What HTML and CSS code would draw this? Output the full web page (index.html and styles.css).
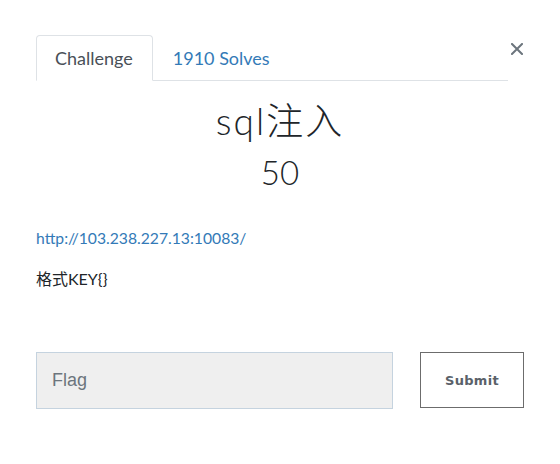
FILE: index.html
```html
<!DOCTYPE html>
<html>
<head>
<meta charset="utf-8">
<link rel="stylesheet" href="styles.css">
</head>
<body>
<div class="page">
  <div class="backdrop-edge"><div class="edge-top"></div><div class="edge-bottom"></div></div>
  <div class="modal">
    <div class="header">
      <ul class="tabs">
        <li class="tab active">Challenge</li>
        <li class="tab link">1910 Solves</li>
      </ul>
      <button class="close" aria-label="Close">
        <svg width="12" height="12" viewBox="0 0 12 12"><path d="M1 1L11 11M11 1L1 11" stroke="#6c757d" stroke-width="2" stroke-linecap="square"/></svg>
      </button>
    </div>
    <h2 class="title">sql注入</h2>
    <h3 class="value">50</h3>
    <div class="desc">
      <p class="url"><a href="#">http://103.238.227.13:10083/</a></p>
      <p class="fmt">格式KEY{}</p>
    </div>
    <form class="submit-row">
      <input class="flag" type="text" placeholder="Flag">
      <button class="submit" type="button">Submit</button>
    </form>
  </div>
</div>
</body>
</html>
```

FILE: styles.css
```css
html, body {
  margin: 0;
  padding: 0;
  background: #fff;
}
.page {
  display: flex;
  height: 464px;
  font-family: Lato, "Noto Sans CJK SC", sans-serif;
  color: #212529;
}
.backdrop-edge {
  width: 1px;
  display: flex;
  flex-direction: column;
}
.edge-top { height: 42px; background: #222; }
.edge-bottom { flex: 1; background: #5d6168; }
.modal {
  flex: 1;
  padding: 35px 36px 0 36px;
}
.header {
  display: flex;
  align-items: flex-start;
}
.tabs {
  list-style: none;
  margin: 0;
  padding: 0;
  display: flex;
  flex: 1;
  border-bottom: 1px solid #dee2e6;
  height: 45px;
}
.tab {
  font-size: 18px;
  line-height: 24px;
  padding: 10px 19px 10px 18px;
  border: 1px solid transparent;
  border-radius: 4px 4px 0 0;
}
.tab.active {
  color: #495057;
  border-color: #dee2e6 #dee2e6 #fff;
  background: #fff;
  height: 24px;
  margin-bottom: -1px;
}
.tab.link { color: #337ab7; padding-left: 19px; }
.close {
  background: none;
  border: 0;
  padding: 0;
  margin: 8px 1px 0 3px;
  width: 12px;
  height: 12px;
  display: flex;
}
.title {
  margin: 18px 0 0;
  text-align: center;
  font-weight: 300;
  font-size: 37px;
  line-height: 44px;
  letter-spacing: 2px;
  color: #212529;
}
.value {
  margin: 10px 0 0;
  text-align: center;
  font-weight: 300;
  font-size: 33px;
  line-height: 38px;
  color: #212529;
}
.desc {
  margin-top: 35px;
  font-size: 16px;
  line-height: 24px;
}
.desc p { margin: 0; }
.url { font-size: 15.7px; }
.url a { color: #337ab7; text-decoration: none; }
.fmt { margin-top: 17px !important; }
.submit-row {
  display: flex;
  margin-top: 61px;
  gap: 27px;
}
.flag {
  width: 357px;
  height: 57px;
  box-sizing: border-box;
  background: #efefef;
  border: 1px solid #c5d3df;
  padding: 0 15px;
  font-family: "Liberation Sans", Arial, sans-serif;
  font-size: 18px;
  color: #495057;
  outline: none;
}
.flag::placeholder { color: #6c757d; }
.submit {
  width: 104px;
  height: 56px;
  background: #fff;
  border: 1px solid #6c6c6c;
  font-family: "DejaVu Sans", Verdana, sans-serif;
  font-weight: bold;
  font-size: 13px;
  letter-spacing: 0.3px;
  color: #5a6169;
}
```
